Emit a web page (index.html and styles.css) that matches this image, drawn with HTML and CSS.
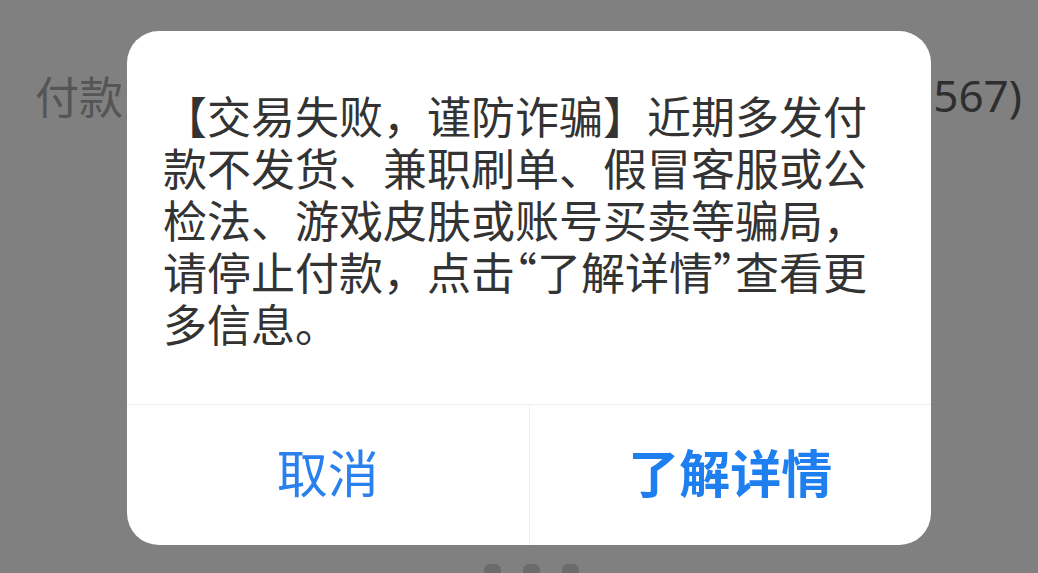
FILE: index.html
```html
<!DOCTYPE html>
<html lang="zh-CN">
<head>
<meta charset="utf-8">
<title>交易失败</title>
<link rel="stylesheet" href="styles.css">
</head>
<body>
<div class="screen">
  <div class="backdrop-row">
    <span class="bg-label">付款</span>
    <span class="bg-value">567)</span>
  </div>
  <div class="bg-dots">
    <span class="dot"></span><span class="dot"></span><span class="dot"></span>
  </div>
  <div class="dialog">
    <div class="dialog-body">
      <p class="message">【交易失败，谨防诈骗】近期多发付<br>款不发货、兼职刷单、假冒客服或公<br>检法、游戏皮肤或账号买卖等骗局，<br>请停止付款，点击<span class="q q-open">“</span>了解详情<span class="q q-close">”</span>查看更<br>多信息。</p>
    </div>
    <div class="dialog-actions">
      <button class="action action-cancel">取消</button>
      <button class="action action-primary">了解详情</button>
    </div>
  </div>
</div>
</body>
</html>
```
FILE: styles.css
```css
html, body {
  margin: 0;
  padding: 0;
}
body {
  background: #808080;
  font-family: "Noto Sans CJK SC", "Noto Sans", sans-serif;
}
.screen {
  position: relative;
  width: 1038px;
  height: 573px;
  overflow: hidden;
  background: #808080;
}
.backdrop-row {
  display: flex;
  justify-content: space-between;
  align-items: center;
  padding: 69px 16px 0 35px;
  height: 52px;
  font-size: 44px;
  line-height: 52px;
}
.bg-label {
  color: #555555;
}
.bg-value {
  color: #2e2e2e;
  font-family: "Noto Sans", "Noto Sans CJK SC", sans-serif;
}
.bg-dots {
  position: absolute;
  left: 484px;
  top: 564px;
  display: flex;
  gap: 22px;
}
.dot {
  width: 17px;
  height: 20px;
  border-radius: 6px;
  background: #6b6b6b;
}
.dialog {
  position: absolute;
  left: 127px;
  top: 31px;
  width: 804px;
  height: 514px;
  background: #ffffff;
  border-radius: 32px;
  display: flex;
  flex-direction: column;
  overflow: hidden;
}
.dialog-body {
  height: 374px;
  box-sizing: border-box;
  padding: 58px 36px 0 36px;
  border-bottom: 1px solid #ececec;
}
.message {
  margin: 0;
  font-size: 44px;
  line-height: 52px;
  color: #333333;
  white-space: nowrap;
}
.q {
  display: inline-block;
  width: 22px;
  height: 52px;
  overflow: hidden;
  vertical-align: top;
}
.q-open {
  text-indent: -22px;
}
.dialog-actions {
  flex: 1;
  display: flex;
}
.action {
  flex: 1;
  border: 0;
  margin: 0;
  padding: 0 0 8px 0;
  background: transparent;
  font-family: "Noto Sans CJK SC", sans-serif;
  font-size: 51px;
  color: #2a80ec;
  cursor: pointer;
}
.action-cancel {
  font-weight: 400;
  border-right: 1px solid #efefef;
}
.action-primary {
  font-weight: 700;
  color: #1d7ff0;
}
```
